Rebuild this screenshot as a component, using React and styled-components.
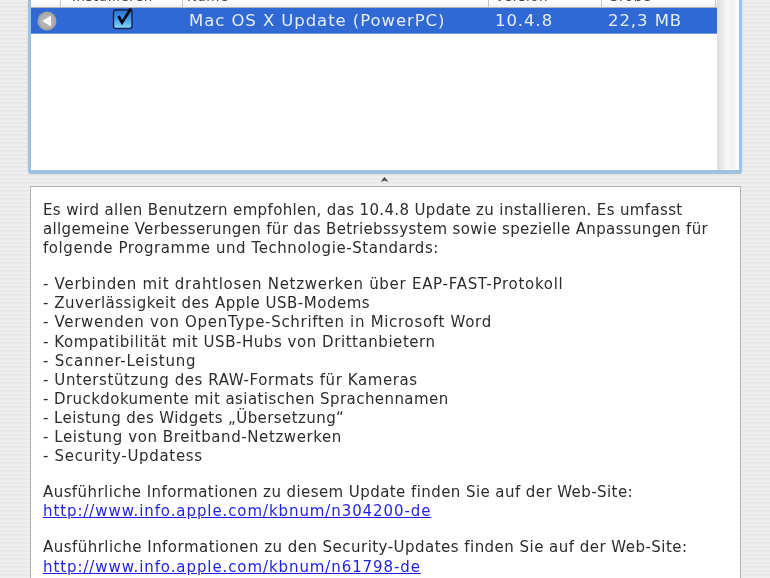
import React from "react";
import styled, { createGlobalStyle } from "styled-components";

const Global = createGlobalStyle`
  html, body { margin: 0; padding: 0; background: #ececec; }
`;

const Page = styled.div`
  width: 770px;
  height: 578px;
  overflow: hidden;
  box-sizing: border-box;
  padding: 0 28px 0 28px;
  font-family: "DejaVu Sans", sans-serif;
  background: repeating-linear-gradient(to bottom, #eeeeee 0, #eeeeee 2px, #e8e8e8 2px, #e8e8e8 4px);
`;

const TableFrame = styled.section`
  height: 173px;
  box-sizing: border-box;
  border: solid #9cc3e6;
  border-width: 0 3px 3px 3px;
  border-radius: 0 0 3px 3px;
  display: flex;
  background: #fff;
  box-shadow: 0 1px 1px rgba(90, 130, 170, 0.5);
`;

const TableBody = styled.div`
  width: 686px;
  display: flex;
  flex-direction: column;
`;

const HeaderRow = styled.div`
  height: 8px;
  box-sizing: border-box;
  display: grid;
  grid-template-columns: 30px 122px 306px 113px 114px;
  border-bottom: 1px solid #b4b4b4;
  overflow: hidden;
  background: linear-gradient(#ffffff, #f2f2f2);
`;

const HeaderCell = styled.div`
  border-right: 1px solid #c4c4c4;
  padding-left: ${(p) => p.$pad}px;
  height: 7px;
  overflow: hidden;
`;

const HeaderLabel = styled.span`
  display: block;
  margin-top: -11px;
  font-size: 13.5px;
  letter-spacing: 0.5px;
  line-height: 15px;
  color: #444;
  white-space: nowrap;
  filter: blur(0.4px);
`;

const SelectedRow = styled.div`
  height: 26px;
  background: #3169d4;
  border-bottom: 1px solid #6f97e0;
  box-sizing: border-box;
  display: grid;
  grid-template-columns: 30px 122px 306px 113px 115px;
  align-items: center;
  color: #e4ecfa;
  font-size: 16.5px;
  letter-spacing: 0.93px;
`;

const DisclosureCell = styled.div`
  display: flex;
  justify-content: center;
  padding: 1px 0 0 1px;
`;

const CheckCell = styled.div`
  display: flex;
  justify-content: center;
  align-self: start;
  padding-left: 2px;
`;

const RowText = styled.div`
  padding-left: ${(p) => p.$pad}px;
  white-space: nowrap;
  filter: blur(0.35px);
`;

const Scroller = styled.div`
  width: 22px;
  background: linear-gradient(to right, #dcdcdc, #f8f8f8 45%, #f1f1f1 70%, #ffffff);
`;

const Splitter = styled.div`
  height: 13px;
  display: flex;
  justify-content: center;
  align-items: center;
  padding-right: 2px;
`;

const Details = styled.article`
  width: 711px;
  height: 420px;
  box-sizing: border-box;
  margin-left: 2px;
  background: #fff;
  border: 1px solid #b2b2b2;
  padding: 14px 0 0 12px;
  font-size: 15px;
  line-height: 19.1px;
  color: #2c2c2c;
  filter: blur(0.35px);
`;

const Para = styled.p`
  margin: 0 0 17px;
`;

const Line = styled.span`
  display: block;
  white-space: nowrap;
  letter-spacing: ${(p) => p.$track}px;
`;

const Bullets = styled.ul`
  margin: 0 0 17px;
  padding: 0;
  list-style: none;
`;

const Bullet = styled.li`
  white-space: nowrap;
  letter-spacing: ${(p) => p.$track}px;
`;

const Link = styled.a`
  display: block;
  white-space: nowrap;
  letter-spacing: 0.91px;
  color: #1f1fe6;
  text-decoration: underline;
`;

const bullets = [
  ["- Verbinden mit drahtlosen Netzwerken über EAP-FAST-Protokoll", 0.72],
  ["- Zuverlässigkeit des Apple USB-Modems", 0.52],
  ["- Verwenden von OpenType-Schriften in Microsoft Word", 0.69],
  ["- Kompatibilität mit USB-Hubs von Drittanbietern", 0.55],
  ["- Scanner-Leistung", 0.75],
  ["- Unterstützung des RAW-Formats für Kameras", 0.59],
  ["- Druckdokumente mit asiatischen Sprachennamen", 0.43],
  ["- Leistung des Widgets „Übersetzung“", 0.42],
  ["- Leistung von Breitband-Netzwerken", 0.59],
  ["- Security-Updatess", 0.68],
];

const BackIcon = () => (
  <svg width="20" height="20" viewBox="0 0 20 20">
    <circle cx="10" cy="10" r="9.5" fill="#a3a3a3" />
    <circle cx="10" cy="10" r="7.5" fill="#b2b2b2" />
    <path d="M14 4.5 L14 15.5 L5 10 Z" fill="#f8f8f8" />
  </svg>
);

const CheckIcon = () => (
  <svg width="22" height="23" viewBox="0 0 22 23">
    <defs>
      <linearGradient id="chk" x1="0" y1="0" x2="0" y2="1">
        <stop offset="0" stopColor="#2d6fd0" />
        <stop offset="0.45" stopColor="#3f96ea" />
        <stop offset="1" stopColor="#86dcfb" />
      </linearGradient>
    </defs>
    <rect x="1.5" y="2" width="18.5" height="18.5" rx="2.5" fill="url(#chk)" stroke="#14264f" strokeWidth="1.4" />
    <path d="M6.5 8 L10 14.5 L19 0.5" fill="none" stroke="#0b0b14" strokeWidth="2.8" />
  </svg>
);

const SplitDot = () => (
  <svg width="9" height="7" viewBox="0 0 9 7">
    <path d="M0.5 6 L4.5 1 L8.5 6 L4.5 4.5 Z" fill="#444" />
  </svg>
);

export default function App() {
  return (
    <Page>
      <Global />
      <TableFrame>
        <TableBody>
          <HeaderRow>
            <HeaderCell $pad={0} />
            <HeaderCell $pad={11}><HeaderLabel>Installieren</HeaderLabel></HeaderCell>
            <HeaderCell $pad={4}><HeaderLabel>Name</HeaderLabel></HeaderCell>
            <HeaderCell $pad={6}><HeaderLabel>Version</HeaderLabel></HeaderCell>
            <HeaderCell $pad={6}><HeaderLabel>Größe</HeaderLabel></HeaderCell>
          </HeaderRow>
          <SelectedRow>
            <DisclosureCell><BackIcon /></DisclosureCell>
            <CheckCell><CheckIcon /></CheckCell>
            <RowText $pad={6}>Mac OS X Update (PowerPC)</RowText>
            <RowText $pad={6}>10.4.8</RowText>
            <RowText $pad={6}>22,3 MB</RowText>
          </SelectedRow>
        </TableBody>
        <Scroller />
      </TableFrame>
      <Splitter><SplitDot /></Splitter>
      <Details>
        <Para>
          <Line $track={0.36}>Es wird allen Benutzern empfohlen, das 10.4.8 Update zu installieren. Es umfasst</Line>
          <Line $track={0.35}>allgemeine Verbesserungen für das Betriebssystem sowie spezielle Anpassungen für</Line>
          <Line $track={0.56}>folgende Programme und Technologie-Standards:</Line>
        </Para>
        <Bullets>
          {bullets.map(([text, track]) => (
            <Bullet key={text} $track={track}>{text}</Bullet>
          ))}
        </Bullets>
        <Para>
          <Line $track={0.43}>Ausführliche Informationen zu diesem Update finden Sie auf der Web-Site:</Line>
          <Link href="#">http://www.info.apple.com/kbnum/n304200-de</Link>
        </Para>
        <Para>
          <Line $track={0.47}>Ausführliche Informationen zu den Security-Updates finden Sie auf der Web-Site:</Line>
          <Link href="#">http://www.info.apple.com/kbnum/n61798-de</Link>
        </Para>
      </Details>
    </Page>
  );
}
